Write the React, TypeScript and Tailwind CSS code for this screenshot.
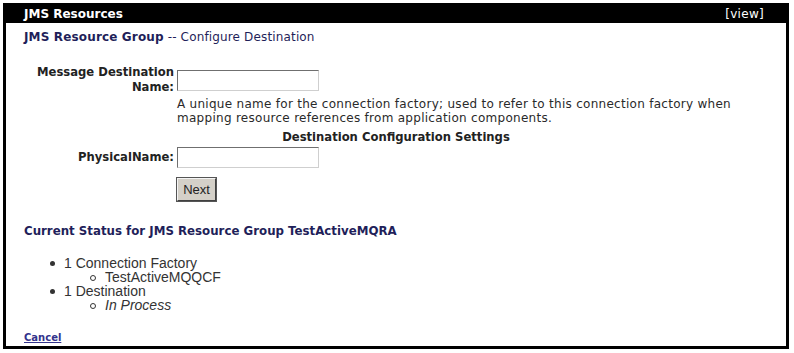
import React from 'react';

const sans = 'font-["DejaVu_Sans",Verdana,sans-serif]';
const arial = 'font-["Liberation_Sans",Arial,sans-serif]';

const TextInput: React.FC = () => (
  <input
    type="text"
    className="h-[21px] w-[142px] border border-t-[#6f6f6f] border-l-[#6f6f6f] border-r-[#cfcfcf] border-b-[#cfcfcf] bg-white outline-none"
  />
);

const Disc: React.FC = () => (
  <span className="mb-[2px] inline-block h-[5px] w-[5px] rounded-full bg-[#333] align-middle" />
);

const Circle: React.FC = () => (
  <span className="mb-[1px] inline-block h-[6px] w-[6px] rounded-full border border-[#333] align-middle" />
);

const App: React.FC = () => {
  return (
    <div className={`h-[353px] w-[794px] overflow-hidden bg-white pl-[3px] pt-[3px] ${sans}`}>
      <div className="h-[346px] w-[786px] border-[3px] border-black">
        <div className="flex h-[17px] items-center justify-between bg-black pl-[18px] pr-[22px] text-white">
          <span className="text-[12px] font-bold leading-[17px]">JMS Resources</span>
          <span className="text-[12px] leading-[17px] tracking-[0.3px]">[view]</span>
        </div>

        <div className="mt-[7px] pl-[18px] text-[12px] leading-[14px] tracking-[0.15px] text-[#1f1f5a]">
          <span className="font-bold">JMS Resource Group</span> -- Configure Destination
        </div>

        <div className="mt-[21px] flex items-start gap-[3px]">
          <label className="w-[168px] text-right text-[11.6px] font-bold leading-[15px] text-[#222]">
            Message Destination
            <br />
            Name:
          </label>
          <div className="mt-[3px]">
            <TextInput />
          </div>
        </div>

        <p className="mt-[2px] pl-[171px] pr-[40px] text-[12px] leading-[14px] tracking-[0.28px] text-[#2a2a2a]">
          A unique name for the connection factory; used to refer to this connection factory when
          mapping resource references from application components.
        </p>

        <div className="mt-[5px] text-center text-[11.6px] font-bold leading-[14px] text-[#222]">
          Destination Configuration Settings
        </div>

        <div className="mt-[3px] flex items-center gap-[3px]">
          <label className="w-[168px] text-right text-[11.6px] font-bold leading-[15px] text-[#222]">
            PhysicalName:
          </label>
          <TextInput />
        </div>

        <div className="mt-[9px] pl-[171px]">
          <button
            className={`h-[23px] w-[39px] border border-t-[#f4f4f4] border-l-[#f4f4f4] border-r-[#404040] border-b-[#404040] bg-[#d4d0c8] text-[13px] text-[#222] shadow-[0_0_0_1px_#555] ${arial}`}
          >
            Next
          </button>
        </div>

        <div className="mt-[23px] pl-[18px] text-[11.8px] font-bold leading-[14px] text-[#1f1f5a]">
          Current Status for JMS Resource Group TestActiveMQRA
        </div>

        <ul className={`mt-[18px] text-[14px] leading-[14px] text-[#333] ${arial}`}>
          <li className="flex items-center pl-[44px]">
            <span className="w-[14px]"><Disc /></span>1 Connection Factory
          </li>
          <li className="flex items-center pl-[84px]">
            <span className="w-[15px]"><Circle /></span>TestActiveMQQCF
          </li>
          <li className="flex items-center pl-[44px]">
            <span className="w-[14px]"><Disc /></span>1 Destination
          </li>
          <li className="flex items-center pl-[84px]">
            <span className="w-[15px]"><Circle /></span>
            <em>In Process</em>
          </li>
        </ul>

        <div className="mt-[19px] pl-[18px] text-[10px] leading-[13px]">
          <a href="#" className="font-bold text-[#33338c] underline">
            Cancel
          </a>
        </div>
      </div>
    </div>
  );
};

export default App;
